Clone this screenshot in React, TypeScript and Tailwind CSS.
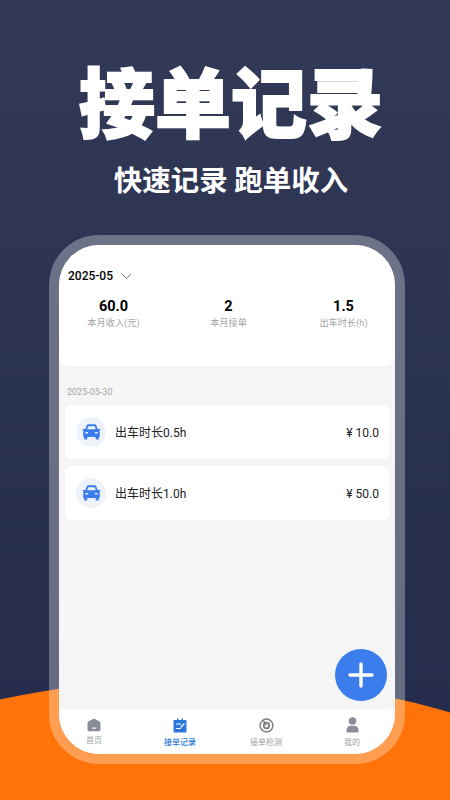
import React from "react";

const CJK = "font-['Roboto','Noto_Sans_CJK_SC',sans-serif]";

function Car() {
  return (
    <svg width="19" height="16" viewBox="0 0 19 16" fill="#3b7ded">
      <path d="M4.6 1.6C4.9.7 5.7.2 6.6.2h5.8c.9 0 1.7.5 2 1.4l1.3 3.3h1.9c.4 0 .9.3.9.8s-.4.9-.9.9h-.6c.5.5.8 1.1.8 1.8v3.7c0 .5-.4.9-.9.9v1.5c0 .6-.5 1-1 1h-1.2c-.6 0-1-.4-1-1v-1.4H5.3v1.4c0 .6-.4 1-1 1H3.1c-.5 0-1-.4-1-1v-1.5c-.5 0-.9-.4-.9-.9V8.4c0-.7.3-1.3.8-1.8h-.6c-.5 0-.9-.4-.9-.9s.5-.8.9-.8h1.9L4.6 1.6z" />
      <path d="M6.3 2.2h6.4l1.1 3H5.2l1.1-3z" fill="#eef3fa" />
      <rect x="3.2" y="8" width="3" height="1.6" rx=".8" fill="#eef3fa" />
      <rect x="12.8" y="8" width="3" height="1.6" rx=".8" fill="#eef3fa" />
    </svg>
  );
}

function Row({ label, amount }: { label: string; amount: string }) {
  return (
    <div className="h-[54px] mx-[6px] w-[325px] bg-white rounded-[7px] flex items-center pl-[12px] pr-[11px]">
      <div className="w-[30px] h-[30px] rounded-full bg-[#eef3f9] flex items-center justify-center -ml-[1px] mr-[1px]">
        <Car />
      </div>
      <span className="ml-[8px] text-[12px] text-[#222] relative top-[1px]">{label}</span>
      <span className="ml-auto text-[12px] text-[#222] relative top-[1px]">{amount}</span>
    </div>
  );
}

function Stat({ value, label }: { value: string; label: string }) {
  return (
    <div className="flex flex-col items-center">
      <span className="text-[14.5px] leading-[18px] font-bold text-black">{value}</span>
      <span className="text-[9.2px] leading-[12px] mt-[1px] text-[#a5a5a5]">{label}</span>
    </div>
  );
}

function Tab({ label, active, icon, pull }: { label: string; active?: boolean; icon: React.ReactNode; pull?: boolean }) {
  return (
    <div className="flex flex-col items-center">
      <div className="h-[18px] mt-[7px] flex items-center justify-center">{icon}</div>
      <span
        className={
          (pull ? "mt-[1px] " : "mt-[3px] ") +
          (active ? "text-[8px] leading-[11px] font-medium text-[#2a79d8]" : "text-[8px] leading-[11px] text-[#a0a0a0]")
        }
      >
        {label}
      </span>
    </div>
  );
}

export default function App() {
  return (
    <div className={"relative w-[450px] h-[800px] overflow-hidden bg-gradient-to-b from-[#323a57] to-[#232a4b] " + CJK}>
      <div className="absolute left-[-220px] top-[679px] w-[840px] h-[340px] rounded-[50%] bg-[#ff7308]" />
      <div className="relative flex flex-col items-center">
        <h1 className="mt-[54px] ml-[12px] h-[90px] text-[76px] leading-[90px] font-black text-white whitespace-nowrap [-webkit-text-stroke:2px_white] font-['Noto_Sans_CJK_SC',sans-serif]">
          接单记录
        </h1>
        <p className="mt-[17px] ml-[12px] h-[36px] text-[28.5px] leading-[36px] font-bold text-white whitespace-nowrap font-['Noto_Sans_CJK_SC',sans-serif]">
          快速记录 跑单收入
        </p>
        <div className="mt-[38px] ml-[4px] w-[356px] h-[529px] rounded-[50px] border-[10px] border-white/30 bg-clip-padding">
          <div className="relative w-[336px] h-[509px] rounded-[40px] bg-[#f5f5f5] overflow-hidden flex flex-col">
            <div className="h-[121px] bg-white rounded-b-[10px] flex flex-col">
              <div className="mt-[22px] ml-[9px] flex items-center h-[18px]">
                <span className="text-[12px] font-medium text-black">2025-05</span>
                <svg className="ml-[8px]" width="11" height="7" viewBox="0 0 11 7" fill="none" stroke="#777" strokeWidth="1">
                  <path d="M1 1l4.5 4.5L10 1" />
                </svg>
              </div>
              <div className="mt-[13px] -ml-[3px] w-[345px] grid grid-cols-3">
                <Stat value="60.0" label="本月收入(元)" />
                <Stat value="2" label="本月接单" />
                <Stat value="1.5" label="出车时长(h)" />
              </div>
            </div>
            <div className="mt-[20px] ml-[8px] h-[12px] text-[9px] leading-[12px] text-[#a5a5a5]">2025-05-30</div>
            <div className="mt-[7px] flex flex-col gap-[7px]">
              <Row label="出车时长0.5h" amount="¥ 10.0" />
              <Row label="出车时长1.0h" amount="¥ 50.0" />
            </div>
            <div className="absolute right-[8px] bottom-[53px] w-[52px] h-[52px] rounded-full bg-[#3b7ded] flex items-center justify-center">
              <svg width="26" height="26" viewBox="0 0 26 26" stroke="#fff" strokeWidth="3.4" strokeLinecap="round">
                <path d="M13 2v22M2 13h22" />
              </svg>
            </div>
            <div className="mt-auto h-[45px] bg-white">
              <div className="-ml-[8px] w-[344px] grid grid-cols-4">
                <Tab
                  pull
                  label="首页"
                  icon={
                    <svg width="14" height="14" viewBox="0 0 14 14">
                      <path d="M7 .5l5.6 3c.6.3.9.8.9 1.500v6.500c0 1-.8 1.800-1.800 1.800H2.300c-1 0-1.800-.8-1.800-1.800V5c0-.7.3-1.200.9-1.500L7 .5z" fill="#8a8d98" />
                      <rect x="5" y="9.500" width="4" height="1.200" rx=".6" fill="#fff" />
                    </svg>
                  }
                />
                <Tab
                  active
                  label="接单记录"
                  icon={
                    <svg width="14" height="15" viewBox="0 0 14 15">
                      <path d="M1.500 2H4V.6h1.500V2h3V.6H10V2h2.500c.6 0 1 .4 1 1v10.500c0 .6-.4 1-1 1h-11c-.6 0-1-.4-1-1V3c0-.6.4-1 1-1z" fill="#2a79d8" />
                      <path d="M3.500 6h4M3.500 10.500h4M8 9l3-3" stroke="#fff" strokeWidth="1.200" fill="none" strokeLinecap="round" />
                    </svg>
                  }
                />
                <Tab
                  label="接单检测"
                  icon={
                    <svg width="15" height="15" viewBox="0 0 15 15" fill="none">
                      <circle cx="7.500" cy="7.500" r="6.400" stroke="#7d7d80" strokeWidth="1.500" />
                      <circle cx="7.500" cy="7.500" r="2.800" stroke="#7d7d80" strokeWidth="1.800" />
                      <path d="M4.500 2.800l3 4.500" stroke="#7d7d80" strokeWidth="1.300" />
                    </svg>
                  }
                />
                <Tab
                  label="我的"
                  icon={
                    <svg width="13" height="16" viewBox="0 0 13 16" fill="#8a8d98">
                      <circle cx="6.500" cy="4" r="3.800" />
                      <path d="M.5 13.500C.5 10.500 2.500 8.800 4.500 8.800h4c2 0 4 1.700 4 4.700v2H.5v-2z" />
                    </svg>
                  }
                />
              </div>
            </div>
          </div>
        </div>
      </div>
    </div>
  );
}
